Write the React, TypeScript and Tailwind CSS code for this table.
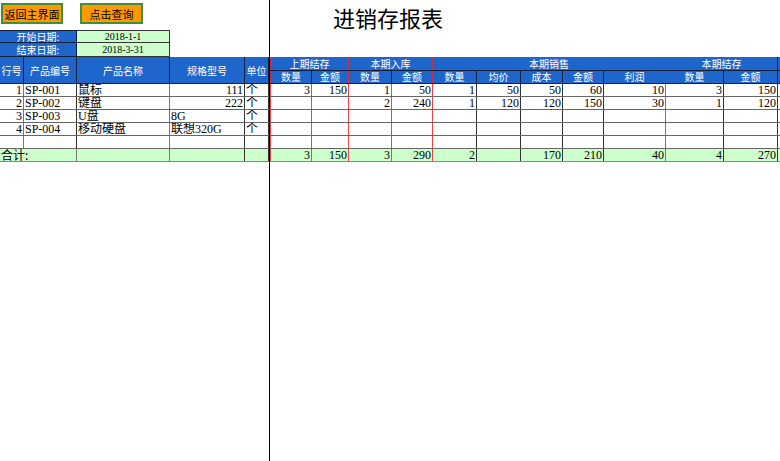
const cn = "font-['Liberation_Serif','Noto_Sans_CJK_SC',serif]";
const hd = "font-['Noto_Sans_CJK_SC',sans-serif]";

type Col = { w: string; line: string };

const leftCols: Col[] = [
  { w: "w-[24px]", line: "border-r-[#777]" },
  { w: "w-[53px]", line: "border-r-[#333]" },
  { w: "w-[93px]", line: "border-r-[#777]" },
  { w: "w-[75px]", line: "border-r-[#333]" },
  { w: "w-[24px]", line: "border-r-[#333]" },
];

const rightCols: Col[] = [
  { w: "w-[42px]", line: "border-r-[#777]" },
  { w: "w-[37px]", line: "border-r-[#f04444]" },
  { w: "w-[43px]", line: "border-r-[#777]" },
  { w: "w-[41px]", line: "border-r-[#f04444]" },
  { w: "w-[44px]", line: "border-r-[#333]" },
  { w: "w-[44px]", line: "border-r-[#333]" },
  { w: "w-[42px]", line: "border-r-[#333]" },
  { w: "w-[41px]", line: "border-r-[#333]" },
  { w: "w-[62px]", line: "border-r-[#f04444]" },
  { w: "w-[58px]", line: "border-r-[#333]" },
  { w: "w-[54px]", line: "border-r-[#333]" },
];

const groups = [
  { name: "上期结存", w: "w-[79px]", line: "border-r-[#c8304a]" },
  { name: "本期入库", w: "w-[84px]", line: "border-r-[#c8304a]" },
  { name: "本期销售", w: "w-[233px]", line: "border-r-[#c8304a]" },
  { name: "本期结存", w: "w-[112px]", line: "border-r-[#10203a]" },
];

const subHeads = ["数量", "金额", "数量", "金额", "数量", "均价", "成本", "金额", "利润", "数量", "金额"];

// left side: [no, code, name, spec, unit]; spec right-aligned when numeric
const leftRows: (string | number)[][] = [
  [1, "SP-001", "鼠标", 111, "个"],
  [2, "SP-002", "键盘", 222, "个"],
  [3, "SP-003", "U盘", "8G", "个"],
  [4, "SP-004", "移动硬盘", "联想320G", "个"],
  ["", "", "", "", ""],
];

const rightRows: (number | "")[][] = [
  [3, 150, 1, 50, 1, 50, 50, 60, 10, 3, 150],
  ["", "", 2, 240, 1, 120, 120, 150, 30, 1, 120],
  ["", "", "", "", "", "", "", "", "", "", ""],
  ["", "", "", "", "", "", "", "", "", "", ""],
  ["", "", "", "", "", "", "", "", "", "", ""],
];

const totals: (number | "")[] = [3, 150, 3, 290, 2, "", 170, 210, 40, 4, 270];

function Btn({ label, w }: { label: string; w: string }) {
  return (
    <div
      className={`${w} h-[21px] flex items-center justify-center bg-[#ff9900] border-2 border-[#3f8f3f] text-[11px] leading-[12px] whitespace-nowrap text-black ${hd}`}
    >
      {label}
    </div>
  );
}

export default function App() {
  return (
    <div className="w-[780px] h-[461px] bg-white flex overflow-hidden">
      {/* frozen left pane */}
      <div className="w-[270px] h-full border-r border-black shrink-0 flex flex-col">
        <div className="h-[30px] flex items-start pt-[3px] pl-[1px] gap-[17px]">
          <Btn label="返回主界面" w="w-[62px]" />
          <Btn label="点击查询" w="w-[63px]" />
        </div>

        <div className="flex h-[13px]">
          <div className={`w-[77px] bg-[#1f66cc] border-t border-r border-b border-[#10203a] text-white text-[10px] leading-[10px] flex items-center justify-center ${hd}`}>
            开始日期:
          </div>
          <div className={`w-[93px] bg-[#ccffcc] border-t border-r border-b border-[#333] text-[10px] leading-[10px] flex items-center justify-center ${cn}`}>
            2018-1-1
          </div>
        </div>
        <div className="flex h-[14px]">
          <div className={`w-[77px] bg-[#1f66cc] border-r border-b border-[#10203a] text-white text-[10px] leading-[10px] flex items-center justify-center ${hd}`}>
            结束日期:
          </div>
          <div className={`w-[93px] bg-[#ccffcc] border-r border-b border-[#333] text-[10px] leading-[10px] flex items-center justify-center ${cn}`}>
            2018-3-31
          </div>
        </div>

        <div className="flex h-[27px] bg-[#1f66cc] border-b border-[#10203a]">
          {["行号", "产品编号", "产品名称", "规格型号", "单位"].map((t, i) => (
            <div
              key={t}
              className={`${leftCols[i].w} h-full border-r border-[#10203a] text-white text-[10px] flex items-center justify-center ${hd}`}
            >
              {t}
            </div>
          ))}
        </div>

        {leftRows.map((r, ri) => (
          <div key={ri} className={`flex h-[13px] border-b border-[#666] text-[12px] leading-[12px] ${cn}`}>
            {r.map((v, i) => (
              <div
                key={i}
                className={`${leftCols[i].w} h-full border-r ${leftCols[i].line} px-[1px] whitespace-nowrap overflow-hidden flex items-center ${
                  typeof v === "number" ? "justify-end" : "justify-start"
                }`}
              >
                {v}
              </div>
            ))}
          </div>
        ))}

        <div className={`flex h-[13px] bg-[#ccffcc] border-b border-[#888] text-[12px] leading-[12px] ${hd}`}>
          <div className="w-[77px] h-full border-r border-[#777] pl-[1px] flex items-center">合计:</div>
          <div className="w-[93px] h-full border-r border-[#777]" />
          <div className="w-[75px] h-full border-r border-[#333]" />
          <div className="w-[24px] h-full border-r border-[#333]" />
        </div>
      </div>

      {/* scrolling right pane */}
      <div className="flex-1 h-full flex flex-col">
        <div className={`h-[57px] pl-[63px] pt-[5px] text-[22px] leading-[24px] text-black ${hd}`}>进销存报表</div>

        <div className="flex h-[14px] bg-[#1f66cc] border-b border-[#10203a]">
          {groups.map((g, i) => (
            <div
              key={g.name}
              className={`${g.w} h-full border-r ${g.line} ${i === 0 ? "border-l border-l-[#c8304a]" : ""} text-white text-[10px] leading-[12px] flex items-center justify-center ${hd}`}
            >
              {g.name}
            </div>
          ))}
        </div>
        <div className="flex h-[13px] bg-[#1f66cc] border-b border-[#10203a]">
          {subHeads.map((t, i) => (
            <div
              key={i}
              className={`${rightCols[i].w} h-full border-r ${
                rightCols[i].line === "border-r-[#f04444]" ? "border-r-[#c8304a]" : "border-r-[#10203a]"
              } ${i === 0 ? "border-l border-l-[#c8304a]" : ""} text-white text-[10px] leading-[12px] flex items-center justify-center ${hd}`}
            >
              {t}
            </div>
          ))}
        </div>

        {rightRows.map((r, ri) => (
          <div key={ri} className={`flex h-[13px] border-b border-[#666] text-[12px] leading-[12px] ${cn}`}>
            {r.map((v, i) => (
              <div
                key={i}
                className={`${rightCols[i].w} h-full border-r ${rightCols[i].line} ${
                  i === 0 ? "border-l border-l-[#f04444]" : ""
                } pr-[1px] flex items-center justify-end`}
              >
                {v}
              </div>
            ))}
          </div>
        ))}

        <div className={`flex h-[13px] bg-[#ccffcc] border-b border-[#888] text-[12px] leading-[12px] ${cn}`}>
          {totals.map((v, i) => (
            <div
              key={i}
              className={`${rightCols[i].w} h-full border-r ${rightCols[i].line} ${
                i === 0 ? "border-l border-l-[#f04444]" : ""
              } pr-[1px] flex items-center justify-end`}
            >
              {v}
            </div>
          ))}
        </div>
      </div>
    </div>
  );
}
